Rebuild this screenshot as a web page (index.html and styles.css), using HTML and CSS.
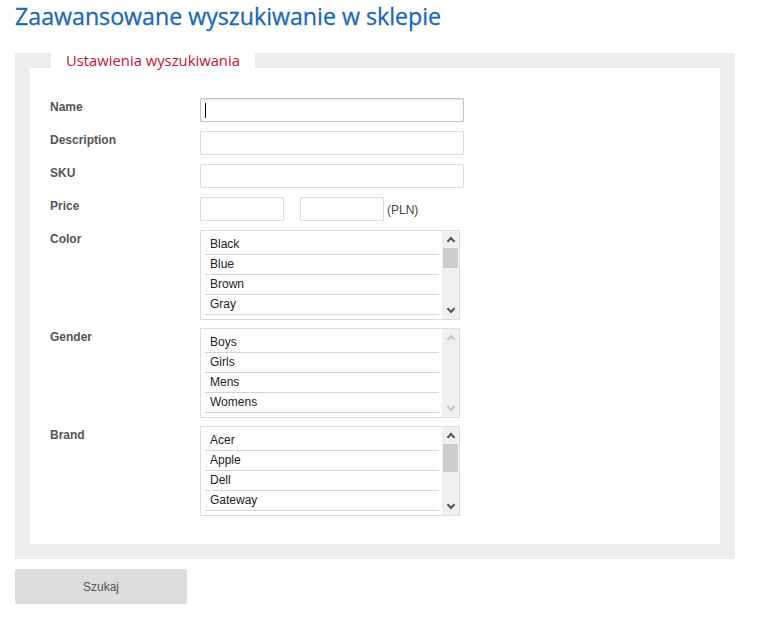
FILE: index.html
```html
<!DOCTYPE html>
<html lang="pl">
<head>
<meta charset="utf-8">
<title>Zaawansowane wyszukiwanie w sklepie</title>
<link rel="stylesheet" href="styles.css">
</head>
<body>
<div class="page">
  <h1 class="title">Zaawansowane wyszukiwanie w sklepie</h1>
  <form class="search-form">
    <fieldset class="settings">
      <legend class="settings-legend">Ustawienia wyszukiwania</legend>
      <div class="form-grid">
        <label class="form-label">Name</label>
        <div class="field-wrap">
          <input class="text-input text-input--focused" type="text">
          <span class="caret"></span>
        </div>

        <label class="form-label">Description</label>
        <div class="field-wrap"><input class="text-input" type="text"></div>

        <label class="form-label">SKU</label>
        <div class="field-wrap"><input class="text-input" type="text"></div>

        <label class="form-label">Price</label>
        <div class="price-row">
          <input class="text-input text-input--small" type="text">
          <input class="text-input text-input--small" type="text">
          <span class="currency">(PLN)</span>
        </div>

        <label class="form-label">Color</label>
        <div class="listbox">
          <ul class="options">
            <li class="option">Black</li>
            <li class="option">Blue</li>
            <li class="option">Brown</li>
            <li class="option">Gray</li>
          </ul>
          <div class="scrollbar">
            <span class="arrow arrow--up"></span>
            <span class="track"><span class="thumb"></span></span>
            <span class="arrow arrow--down"></span>
          </div>
        </div>

        <label class="form-label">Gender</label>
        <div class="listbox">
          <ul class="options">
            <li class="option">Boys</li>
            <li class="option">Girls</li>
            <li class="option">Mens</li>
            <li class="option">Womens</li>
          </ul>
          <div class="scrollbar scrollbar--disabled">
            <span class="arrow arrow--up"></span>
            <span class="track"></span>
            <span class="arrow arrow--down"></span>
          </div>
        </div>

        <label class="form-label">Brand</label>
        <div class="listbox">
          <ul class="options">
            <li class="option">Acer</li>
            <li class="option">Apple</li>
            <li class="option">Dell</li>
            <li class="option">Gateway</li>
          </ul>
          <div class="scrollbar">
            <span class="arrow arrow--up"></span>
            <span class="track"><span class="thumb thumb--brand"></span></span>
            <span class="arrow arrow--down"></span>
          </div>
        </div>
      </div>
    </fieldset>
    <button class="submit" type="button">Szukaj</button>
  </form>
</div>
</body>
</html>
```
FILE: styles.css
```css
* { box-sizing: border-box; }

html, body {
  margin: 0;
  padding: 0;
  background: #ffffff;
}

body {
  font-family: "Liberation Sans", Arial, sans-serif;
  font-size: 12px;
  color: #222;
}

.page {
  padding: 0 42px 0 15px;
}

.title {
  margin: 0;
  padding-top: 1px;
  font-family: "Open Sans", "Noto Sans", sans-serif;
  font-weight: 400;
  font-size: 23.2px;
  line-height: 30px;
  color: #1a69b5;
  height: 53px;
  letter-spacing: 0;
  -webkit-text-stroke: 0.3px #1a69b5;
}

.settings {
  margin: 0;
  border: 15px solid #ececec;
  padding: 30px 20px 29px 20px;
  min-width: 0;
}

.settings-legend {
  margin-left: 1px;
  padding: 0 15px;
  background: #ffffff;
  font-family: "Open Sans", "Noto Sans", sans-serif;
  font-size: 14.8px;
  line-height: 15px;
  height: 15px;
  color: #c4122f;
}

.form-grid {
  display: grid;
  grid-template-columns: 150px 1fr;
  row-gap: 9px;
}

.form-label {
  font-weight: bold;
  font-size: 12px;
  color: #555;
  padding-top: 2px;
  line-height: 14px;
}

.field-wrap {
  position: relative;
  width: 264px;
}

.text-input {
  display: block;
  width: 264px;
  height: 24px;
  margin: 0;
  border: 1px solid #dddddd;
  border-radius: 1px;
  background: #fff;
  font: 12px "Liberation Sans", Arial, sans-serif;
  outline: none;
  padding: 0 4px;
}

.text-input--focused {
  border-color: #c4c4c4;
  box-shadow: inset 0 1px 2px rgba(0, 0, 0, 0.12);
}

.caret {
  position: absolute;
  left: 5px;
  top: 5px;
  width: 1px;
  height: 15px;
  background: #000;
}

.price-row {
  display: flex;
  align-items: center;
  gap: 16px;
}

.text-input--small {
  width: 84px;
}

.currency {
  margin-left: -13px;
  padding-top: 1px;
  color: #444;
  font-size: 12px;
}

.listbox {
  display: flex;
  width: 260px;
  height: 90px;
  border: 1px solid #dddddd;
  background: #fff;
  margin-top: 0;
  margin-bottom: -1px;
}

.options {
  flex: 1;
  list-style: none;
  margin: 0;
  padding: 4px 3px 0 4px;
  overflow: hidden;
}

.option {
  height: 20px;
  line-height: 19px;
  padding-left: 5px;
  border-bottom: 1px solid #d6d6d6;
  color: #222;
  font-size: 12px;
}

.scrollbar {
  width: 17px;
  display: flex;
  flex-direction: column;
  background: #f0f0f0;
}

.arrow {
  height: 17px;
  position: relative;
}

.arrow::before {
  content: "";
  position: absolute;
  left: 6px;
  width: 4px;
  height: 4px;
  border-left: 2px solid #555;
  border-top: 2px solid #555;
}

.arrow--up::before {
  top: 7px;
  transform: rotate(45deg);
}

.arrow--down::before {
  top: 4px;
  transform: rotate(225deg);
}

.scrollbar--disabled .arrow::before {
  border-color: #c6c6c6;
}

.track {
  flex: 1;
  display: flex;
  flex-direction: column;
  padding: 0 1px;
}

.thumb {
  display: block;
  height: 20px;
  background: #cdcdcd;
}

.thumb--brand {
  height: 28px;
}

.submit {
  display: block;
  margin-top: 10px;
  width: 172px;
  height: 35px;
  border: none;
  border-radius: 2px;
  background: #dddddd;
  color: #555;
  font: 12px "Liberation Sans", Arial, sans-serif;
  padding: 0;
}
```
